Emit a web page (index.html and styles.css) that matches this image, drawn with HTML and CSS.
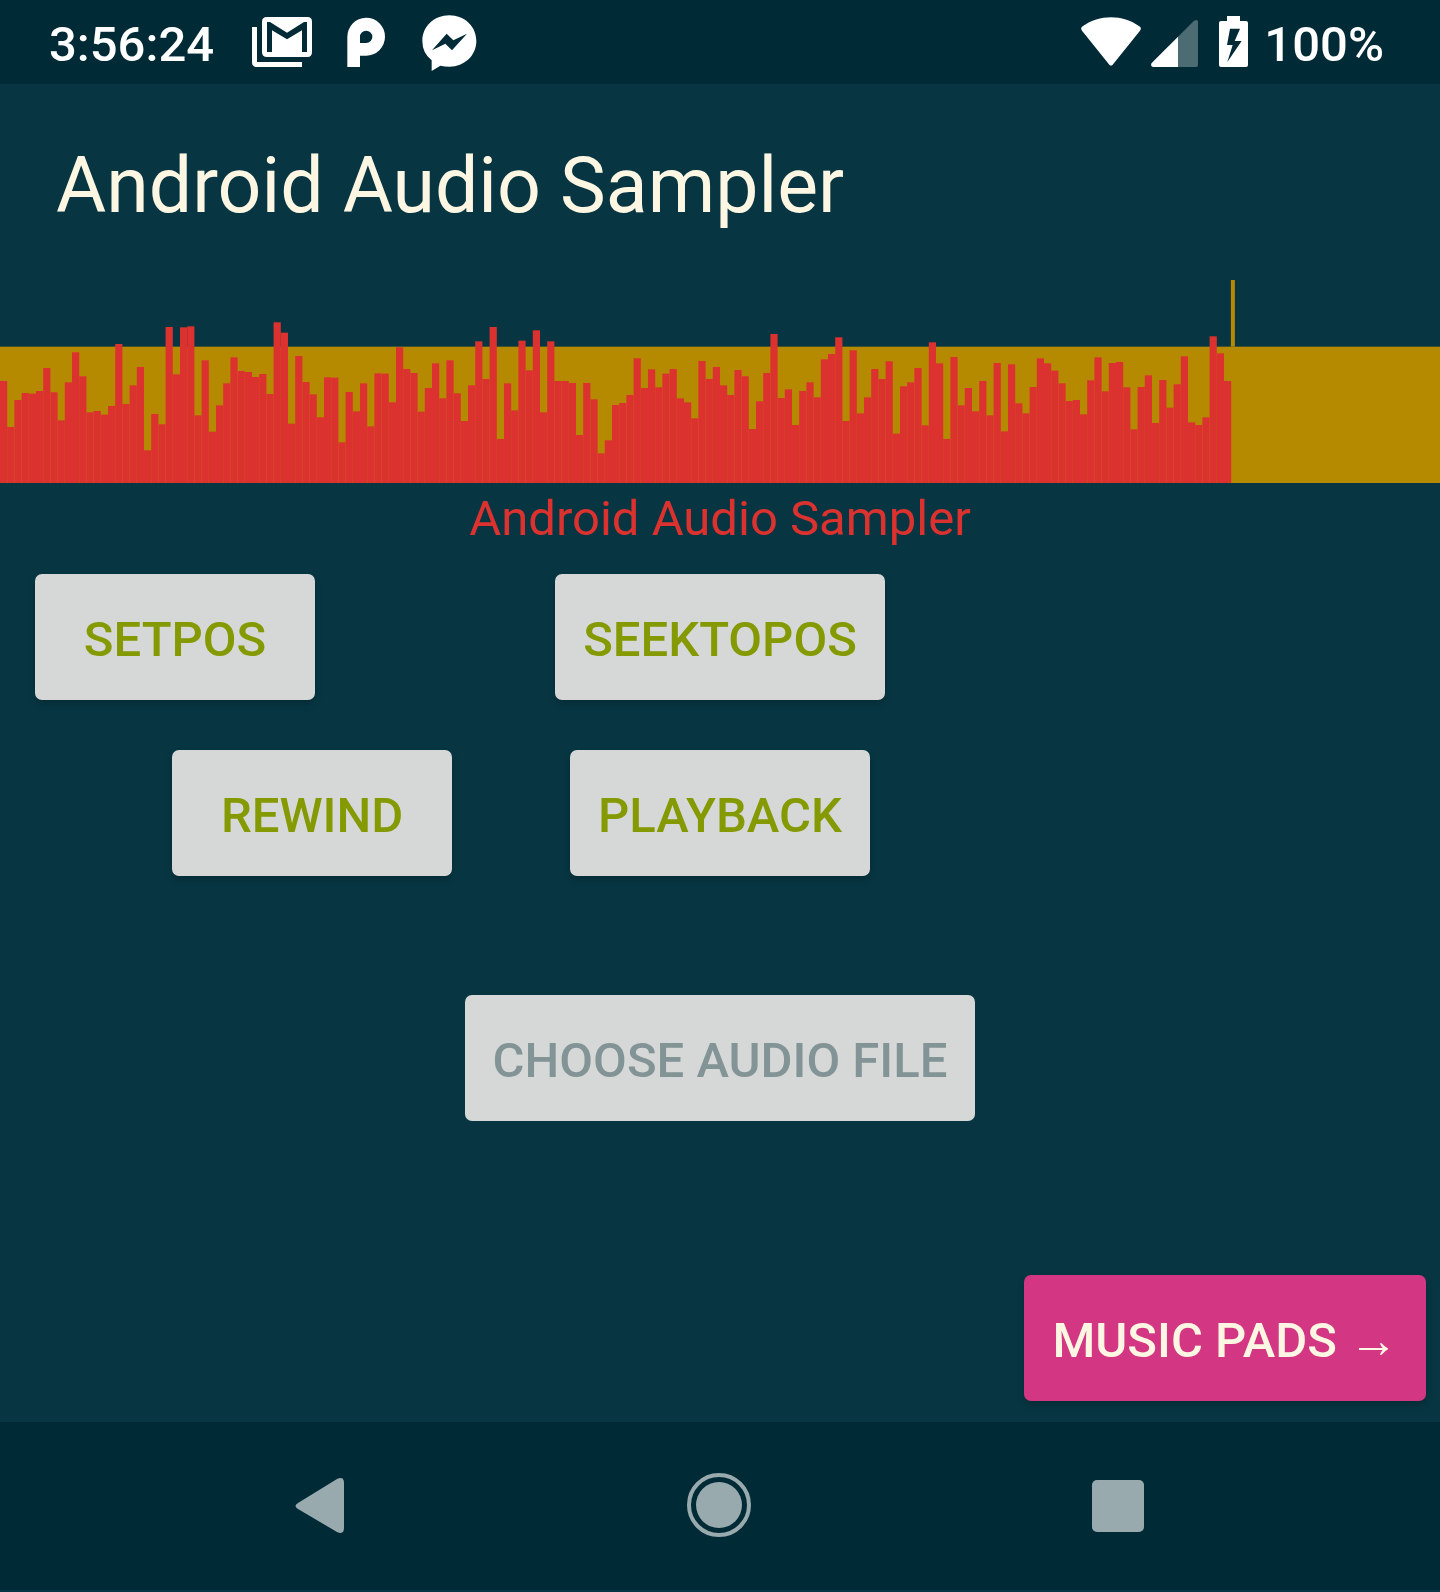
FILE: index.html
```html
<!DOCTYPE html>
<html lang="en">
<head>
<meta charset="utf-8">
<meta name="viewport" content="width=device-width, initial-scale=1">
<title>Android Audio Sampler</title>
<link rel="stylesheet" href="styles.css">
</head>
<body>
<div class="screen">
  <header class="status">
    <div class="status-group">
      <time class="status-text clock">3:56:24</time>
      <svg class="status-icon mail" viewBox="756 0 180 252" role="img" aria-label="Mail">
        <path fill="#fff" fill-rule="evenodd" d="M801 51H922Q936 51 936 65V157Q936 171 922 171H801Q786 171 786 157V65Q786 51 801 51ZM801 66V156H816V91L861 118L906 91V156H921V66H912L861 98L810 66Z"/>
        <path fill="#fff" d="M756 81H771V186H906V201H770Q756 201 756 187Z"/>
      </svg>
      <svg class="status-icon radio" viewBox="1041 0 120 252" role="img" aria-label="Pandora">
        <path fill="#fff" fill-rule="evenodd" d="M1042 201V111A56.500 57 0 1 1 1098 167H1080V201ZM1080 129V111A18.500 18.500 0 1 1 1098 129Z"/>
      </svg>
      <svg class="status-icon chat" viewBox="1266 0 165 252" role="img" aria-label="Messenger">
        <path fill="#fff" fill-rule="evenodd" d="M1348 46C1394 46 1429 80 1429 123S1394 200 1348 200Q1334 200 1321 197L1295 213V181Q1267 159 1267 123C1267 80 1302 46 1348 46ZM1296 151L1336 131L1356 151L1401 101L1360 121L1340 101Z"/>
      </svg>
    </div>
    <div class="status-group">
      <svg class="status-icon wifi" viewBox="63 0 180 252" role="img" aria-label="Wi-Fi">
        <path fill="#fff" d="M148 194L66 92Q60 84 68 79C118 43 188 43 238 79Q246 84 240 92L158 194Q153 199 148 194Z"/>
      </svg>
      <svg class="status-icon signal" viewBox="273 0 144 252" role="img" aria-label="Signal">
        <path fill="#fff" d="M275 189L354 110V201H279Q270 198 275 189Z"/>
        <path fill="#4d6b73" d="M354 110L402 62Q414 56 414 66V195Q414 201 408 201H354Z"/>
      </svg>
      <svg class="status-icon battery" viewBox="477 0 87 252" role="img" aria-label="Battery charging">
        <path fill="#fff" fill-rule="evenodd" d="M501 48H540V63H558Q564 63 564 69V195Q564 201 558 201H483Q477 201 477 195V69Q477 63 483 63H501ZM510 86L501 135H518L502 186L545 123H524L540 86Z"/>
      </svg>
      <span class="status-text">100%</span>
    </div>
  </header>

  <main class="app">
    <h1 class="title">Android Audio Sampler</h1>
    <svg class="wave" id="wave" viewBox="0 30 4320 609" preserveAspectRatio="none" role="img" aria-label="Waveform"></svg>
    <p class="caption">Android Audio Sampler</p>
    <div class="row">
      <button class="btn first" type="button">SETPOS</button>
      <button class="btn middle" type="button">SEEKTOPOS</button>
    </div>
    <div class="row">
      <button class="btn near" type="button">REWIND</button>
      <button class="btn middle" type="button">PLAYBACK</button>
    </div>
    <div class="row choose">
      <button class="btn middle muted" type="button">CHOOSE AUDIO FILE</button>
    </div>
    <div class="next">
      <button class="btn accent" type="button">MUSIC PADS →</button>
    </div>
  </main>

  <nav class="nav" aria-label="System">
    <button class="nav-btn" type="button" aria-label="Back">
      <svg class="nav-icon" viewBox="0 0 64 64"><path d="M10 29L49 5Q56 2 56 9V54Q56 61 49 58L10 35Q5 32 10 29Z"/></svg>
    </button>
    <button class="nav-btn" type="button" aria-label="Home">
      <svg class="nav-icon" viewBox="0 0 64 64"><circle cx="32" cy="31" r="23"/><circle class="ring" cx="32" cy="31" r="30"/></svg>
    </button>
    <button class="nav-btn" type="button" aria-label="Recent apps">
      <svg class="nav-icon" viewBox="0 0 64 64"><rect x="6" y="6" width="52" height="52" rx="5"/></svg>
    </button>
  </nav>
</div>
<script src="wave.js"></script>
</body>
</html>
```
FILE: styles.css
```css
* {
  box-sizing: border-box;
}

body {
  margin: 0;
  background: #073642;
  font-family: Roboto, "Noto Sans", sans-serif;
  font-size: 49px;
  line-height: 58px;
}

.screen {
  display: flex;
  flex-direction: column;
  min-height: 100vh;
  padding-bottom: 2px;
}

/* Status bar */
.status {
  display: flex;
  justify-content: space-between;
  padding: 0 56px 0 49px;
  background: #002b36;
}

.status-group {
  display: flex;
  align-items: center;
}

.status-text {
  padding-top: 6px;
  color: #fff;
  font-weight: 500;
}

.status-icon {
  display: block;
  height: 84px;
}

.clock {
  margin-right: 38px;
}

.mail {
  width: 60px;
  margin-right: 35px;
}

.radio {
  width: 40px;
  margin-right: 35px;
}

.chat {
  width: 55px;
}

.wifi {
  width: 60px;
  margin-right: 10px;
}

.signal {
  width: 48px;
  margin-right: 20px;
}

.battery {
  width: 29px;
  margin-right: 16px;
}

/* App content */
.app {
  display: flex;
  flex: 1;
  flex-direction: column;
}

.title {
  margin: 0;
  padding: 57px 56px 49px;
  color: #fdf6e3;
  font-size: 77px;
  font-weight: 400;
  line-height: 90px;
}

.wave {
  display: block;
  width: 100%;
  height: 203px;
}

.band,
.cursor {
  fill: #b58900;
}

.bar {
  fill: #dc322f;
}

.caption {
  margin: 7px 0 26px;
  color: #dc322f;
  text-align: center;
}

.row {
  display: grid;
  grid-template-columns: 1fr auto 1fr;
  margin-bottom: 50px;
}

.btn {
  min-width: 280px;
  padding: 37px 28px 31px;
  border: 0;
  border-radius: 7px;
  background: #d6d8d7;
  box-shadow: 0 4px 7px rgba(0, 0, 0, 0.2);
  color: #859900;
  font: inherit;
  font-weight: 500;
  white-space: nowrap;
}

.first {
  justify-self: start;
  margin-left: 35px;
}

.near {
  justify-self: end;
  margin-right: 118px;
}

.middle {
  grid-column: 2;
}

.choose {
  margin-top: 69px;
}

.muted {
  box-shadow: none;
  color: #839496;
}

.next {
  display: flex;
  justify-content: flex-end;
  margin-top: auto;
  padding: 0 14px 21px;
}

.accent {
  background: #d33682;
  color: #fdf6e3;
}

/* Navigation bar */
.nav {
  display: grid;
  grid-template-columns: repeat(3, 1fr);
  padding: 0 122px 0 120px;
  background: #002b36;
}

.nav-btn {
  display: flex;
  align-items: center;
  justify-content: center;
  height: 168px;
  padding: 0;
  border: 0;
  background: none;
}

.nav-icon {
  width: 64px;
  height: 64px;
  overflow: visible;
  fill: #99aaaf;
}

.ring {
  fill: none;
  stroke: #99aaaf;
  stroke-width: 4;
}
```
FILE: wave.js
```js
// Top edge of each peak, in the units of the waveform's viewBox.
const peaks = [
  333, 471, 390, 369, 371, 363, 294, 367, 451, 337, 247, 319, 427, 423, 434,
  408, 222, 402, 346, 291, 541, 432, 463, 171, 313, 172, 169, 436, 271, 485,
  406, 340, 262, 303, 306, 321, 312, 372, 157, 188, 461, 258, 336, 373, 442,
  322, 323, 517, 366, 424, 340, 469, 310, 311, 397, 232, 297, 309, 425, 354,
  280, 385, 271, 370, 453, 346, 214, 327, 171, 507, 340, 421, 212, 301, 181,
  427, 214, 333, 333, 339, 495, 339, 388, 550, 511, 405, 399, 375, 265, 354,
  298, 352, 311, 297, 385, 397, 445, 273, 327, 291, 346, 375, 300, 319, 477,
  394, 309, 192, 384, 358, 465, 363, 337, 382, 268, 252, 202, 453, 241, 430,
  382, 297, 327, 274, 491, 349, 337, 294, 466, 217, 280, 507, 261, 406, 354,
  424, 333, 436, 279, 484, 283, 400, 430, 351, 265, 280, 302, 340, 393, 390,
  433, 331, 262, 364, 279, 276, 352, 478, 351, 316, 459, 330, 413, 343, 259,
  457, 465, 442, 199, 250, 333
];
// Peaks above were read left to right; the bars share one baseline.
const BASE = 639;
const STEP = 4320 / 200;
const wave = document.getElementById("wave");

function addRect(name, x, y, width, bottom) {
  const rect = document.createElementNS("http://www.w3.org/2000/svg", "rect");
  rect.setAttribute("class", name);
  rect.setAttribute("x", x);
  rect.setAttribute("y", y);
  rect.setAttribute("width", width);
  rect.setAttribute("height", bottom - y);
  wave.append(rect);
}

addRect("band", 0, 230, 4320, BASE);
peaks.forEach((top, i) => addRect("bar", i * STEP, top, STEP, BASE));
addRect("cursor", peaks.length * STEP - 1, 30, 12, 230);
```
